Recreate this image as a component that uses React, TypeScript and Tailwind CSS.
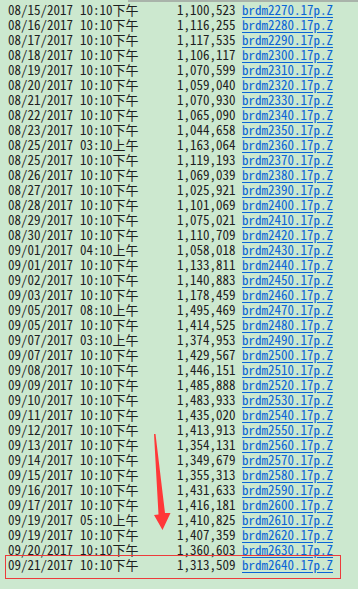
const rows: [string, string, string, string][] = [
  ['08/15/2017', '10:10下午', '1,100,523', '2270'],
  ['08/16/2017', '10:10下午', '1,116,255', '2280'],
  ['08/17/2017', '10:10下午', '1,117,535', '2290'],
  ['08/18/2017', '10:10下午', '1,106,117', '2300'],
  ['08/19/2017', '10:10下午', '1,070,599', '2310'],
  ['08/20/2017', '10:10下午', '1,059,040', '2320'],
  ['08/21/2017', '10:10下午', '1,070,930', '2330'],
  ['08/22/2017', '10:10下午', '1,065,090', '2340'],
  ['08/23/2017', '10:10下午', '1,044,658', '2350'],
  ['08/25/2017', '03:10上午', '1,163,064', '2360'],
  ['08/25/2017', '10:10下午', '1,119,193', '2370'],
  ['08/26/2017', '10:10下午', '1,069,039', '2380'],
  ['08/27/2017', '10:10下午', '1,025,921', '2390'],
  ['08/28/2017', '10:10下午', '1,101,069', '2400'],
  ['08/29/2017', '10:10下午', '1,075,021', '2410'],
  ['08/30/2017', '10:10下午', '1,110,709', '2420'],
  ['09/01/2017', '04:10上午', '1,058,018', '2430'],
  ['09/01/2017', '10:10下午', '1,133,811', '2440'],
  ['09/02/2017', '10:10下午', '1,140,883', '2450'],
  ['09/03/2017', '10:10下午', '1,178,459', '2460'],
  ['09/05/2017', '08:10上午', '1,495,469', '2470'],
  ['09/05/2017', '10:10下午', '1,414,525', '2480'],
  ['09/07/2017', '03:10上午', '1,374,953', '2490'],
  ['09/07/2017', '10:10下午', '1,429,567', '2500'],
  ['09/08/2017', '10:10下午', '1,446,151', '2510'],
  ['09/09/2017', '10:10下午', '1,485,888', '2520'],
  ['09/10/2017', '10:10下午', '1,483,933', '2530'],
  ['09/11/2017', '10:10下午', '1,435,020', '2540'],
  ['09/12/2017', '10:10下午', '1,413,913', '2550'],
  ['09/13/2017', '10:10下午', '1,354,131', '2560'],
  ['09/14/2017', '10:10下午', '1,349,679', '2570'],
  ['09/15/2017', '10:10下午', '1,355,313', '2580'],
  ['09/16/2017', '10:10下午', '1,431,633', '2590'],
  ['09/17/2017', '10:10下午', '1,416,181', '2600'],
  ['09/19/2017', '05:10上午', '1,410,825', '2610'],
  ['09/19/2017', '10:10下午', '1,407,359', '2620'],
  ['09/20/2017', '10:10下午', '1,360,603', '2630'],
  ['09/21/2017', '10:10下午', '1,313,509', '2640'],
];

export default function App() {
  return (
    <div className="relative w-[358px] h-[589px] overflow-hidden bg-[#cce8cf] text-[13px] leading-[15px] text-[#1e1e1e] font-['Noto_Sans_Mono_CJK_SC','Noto_Sans_CJK_SC',monospace]">
      <div className="flex">
        <div className="w-[128px]" />
        <div className="flex-1 h-[2px] bg-[#a9b3aa]" />
      </div>
      <div className="flex flex-col">
        {rows.map(([date, time, size, n]) => (
          <div key={date + time} className="flex h-[15px] pl-[8px] whitespace-pre">
            <span className="w-[72px]">{date}</span>
            <span className="w-[97px]">{time}</span>
            <span className="w-[58.5px] text-right">{size}</span>
            <a href="#" className="ml-[6.5px] text-[#0a64d6] underline underline-offset-2">
              brdm{n}.17p.Z
            </a>
          </div>
        ))}
      </div>

      {/* annotation overlay */}
      <div className="absolute left-[5px] top-[555px] w-[336px] h-[24px] border-[1.5px] border-[#ec3b3b]" />
      <svg className="absolute left-0 top-0" width="358" height="589" viewBox="0 0 358 589">
        <polygon
          points="154,434 155.5,434 165,513 170.5,513 162.5,530 154,515 158.5,514.5"
          fill="#ff3838"
        />
      </svg>
    </div>
  );
}
